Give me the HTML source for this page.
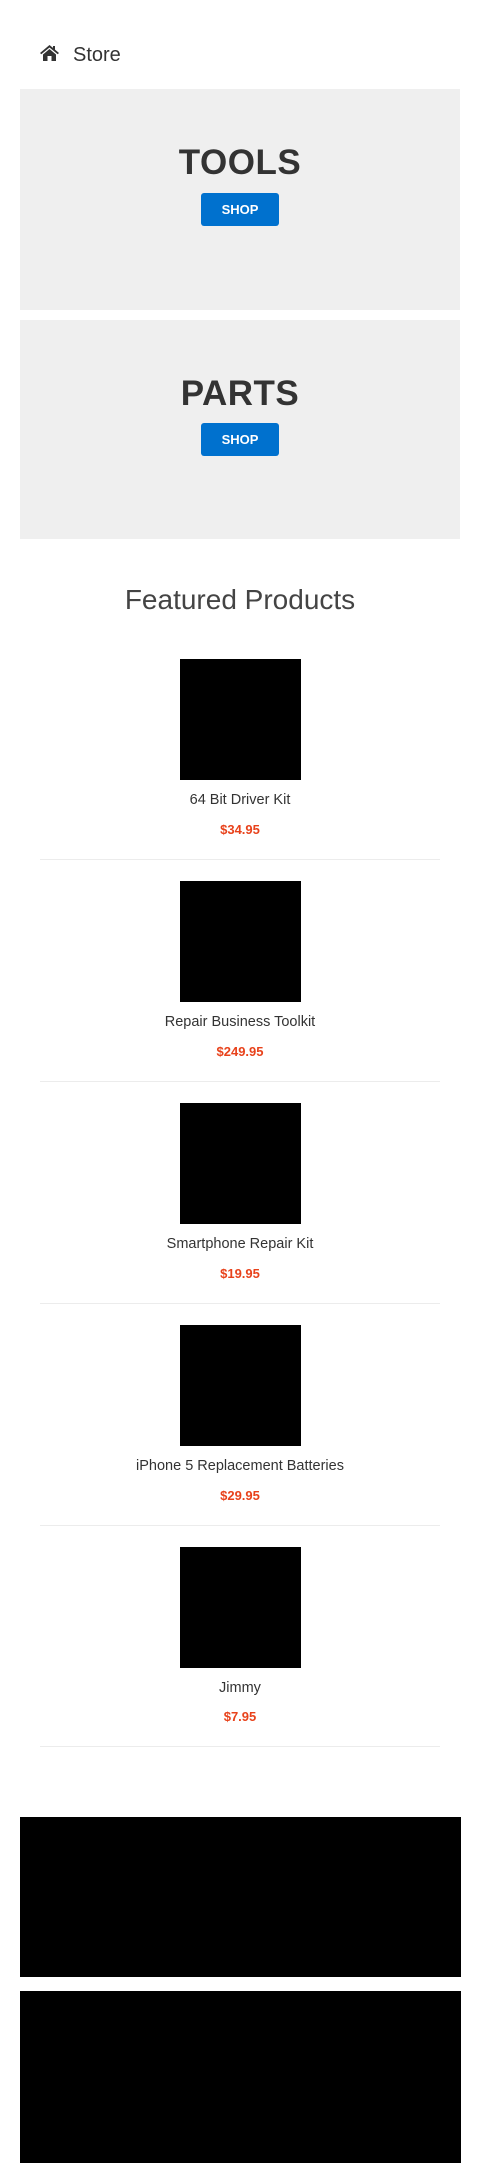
<!DOCTYPE html>
<html><head><meta charset="utf-8"><style>
*{margin:0;padding:0;box-sizing:border-box}
body{width:480px;height:2163px;position:relative;background:#fff;font-family:"Liberation Sans",sans-serif;color:#333;overflow:hidden}
.a{position:absolute}
.panel{position:absolute;left:20px;width:440px;background:#efefef}
.ttl{position:absolute;left:0;width:100%;text-align:center;font-weight:bold;font-size:35px;letter-spacing:0.5px;line-height:40px;color:#333}
.btn{position:absolute;left:181px;width:78px;height:33px;background:#0071ce;border-radius:3px;color:#fff;font-weight:bold;font-size:13px;line-height:33px;text-align:center}
.img{position:absolute;left:180px;width:121px;height:121px;background:#000}
.nm{position:absolute;left:0;width:480px;text-align:center;font-size:14.5px;line-height:20px;color:#333}
.pr{position:absolute;left:0;width:480px;text-align:center;font-size:13px;font-weight:bold;line-height:18px;color:#e8421b}
.hr{position:absolute;left:40px;width:400px;height:1px;background:#ececec}
</style></head><body>
<svg class="a" style="left:40px;top:45px" width="19" height="16" viewBox="0 0 19 16"><path d="M9.5 0 L0 8 L1.3 9.3 L9.5 2.5 L17.7 9.3 L19 8 L15 4.6 V1 H13 V2.9 Z M3 9.5 V16 H7.5 V11 H11.5 V16 H16 V9.5 L9.5 4 Z" fill="#333"/></svg>
<div class="a" style="left:73px;top:43px;font-size:20px;line-height:24px">Store</div>

<div class="panel" style="top:89px;height:221px">
<div class="ttl" style="top:54px">TOOLS</div>
<div class="btn" style="top:104px">SHOP</div>
</div>
<div class="panel" style="top:320px;height:219px">
<div class="ttl" style="top:54px">PARTS</div>
<div class="btn" style="top:103px">SHOP</div>
</div>

<div class="a" style="left:0;width:480px;top:583px;text-align:center;font-size:28px;font-weight:300;line-height:34px;color:#444">Featured Products</div>

<div class="img" style="top:659px"></div><div class="nm" style="top:790px">64 Bit Driver Kit</div><div class="pr" style="top:821px">$34.95</div><div class="hr" style="top:859px"></div>
<div class="img" style="top:881px"></div><div class="nm" style="top:1012px">Repair Business Toolkit</div><div class="pr" style="top:1043px">$249.95</div><div class="hr" style="top:1081px"></div>
<div class="img" style="top:1103px"></div><div class="nm" style="top:1234px">Smartphone Repair Kit</div><div class="pr" style="top:1265px">$19.95</div><div class="hr" style="top:1303px"></div>
<div class="img" style="top:1325px"></div><div class="nm" style="top:1456px">iPhone 5 Replacement Batteries</div><div class="pr" style="top:1487px">$29.95</div><div class="hr" style="top:1525px"></div>
<div class="img" style="top:1547px"></div><div class="nm" style="top:1678px">Jimmy</div><div class="pr" style="top:1708px">$7.95</div><div class="hr" style="top:1746px"></div>

<div class="a" style="left:20px;width:441px;top:1817px;height:160px;background:#000"></div>
<div class="a" style="left:20px;width:441px;top:1991px;height:172px;background:#000"></div>
</body></html>
